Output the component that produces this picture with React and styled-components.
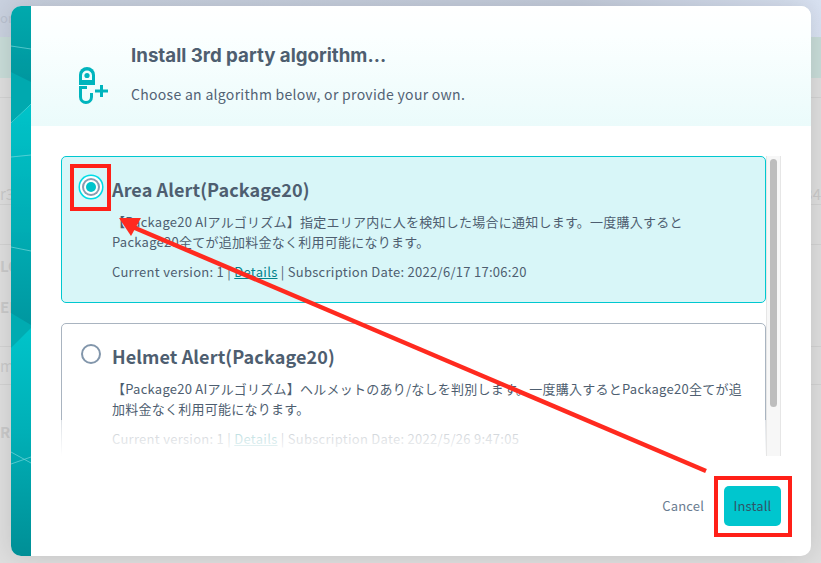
import React from "react";
import styled, { createGlobalStyle } from "styled-components";

const Global = createGlobalStyle`
  html, body { margin: 0; padding: 0; width: 821px; height: 563px; overflow: hidden; background: #dedede; }
  * { box-sizing: border-box; }
  body { font-family: "Noto Sans CJK JP", "Noto Sans", sans-serif; }
`;

const Page = styled.div`
  position: relative;
  width: 821px;
  height: 563px;
  overflow: hidden;
  background: #dedede;
`;

const BackTop = styled.div`
  height: 37px;
  background: linear-gradient(90deg, #c9d1df 0%, #c4ccdb 70%, #d9e2f2 100%);
  color: #b9c1cf;
  font-size: 13px;
  line-height: 36px;
`;
const BackBand = styled.div`
  height: 41px;
  background: #c8dcd8;
`;
const BackRow = styled.div`
  height: ${(p) => p.$h}px;
  border-bottom: 1px solid ${(p) => (p.$plain ? "transparent" : "#d2d2d2")};
  display: flex;
  justify-content: space-between;
  align-items: ${(p) => p.$align || "center"};
  color: #c9c9c9;
  font-size: 15px;
  font-weight: ${(p) => (p.$bold ? 700 : 400)};
`;

const Modal = styled.div`
  position: absolute;
  left: 11px;
  top: 6px;
  width: 800px;
  height: 550px;
  display: flex;
  background: #fff;
  border-radius: 10px;
  overflow: hidden;
  box-shadow: 0 0 24px rgba(0, 0, 0, 0.12);
`;

const Strip = styled.svg`
  width: 20px;
  height: 550px;
  flex: none;
  display: block;
`;

const Main = styled.div`
  flex: 1;
  min-width: 0;
  display: flex;
  flex-direction: column;
`;

const Header = styled.header`
  height: 120px;
  flex: none;
  display: flex;
  padding-left: 47px;
  background: linear-gradient(180deg, #ffffff 0%, #fbffff 25%, #ebfbfb 100%);
`;
const HeaderIcon = styled.svg`
  width: 32px;
  height: 40px;
  margin-top: 60px;
  flex: none;
`;
const HeaderText = styled.div`
  margin-left: 21px;
  padding-top: 37px;
`;
const Title = styled.h1`
  margin: 0;
  font: 700 18.7px/26px Inter, sans-serif;
  color: #4e5e70;
`;
const Subtitle = styled.p`
  margin: 15px 0 0;
  font-size: 14px;
  line-height: 20px;
  letter-spacing: 0.3px;
  color: #526274;
`;

const Body = styled.div`
  flex: none;
  height: 300px;
  margin: 30px 0 0 30px;
  width: 720px;
  display: flex;
`;
const List = styled.div`
  position: relative;
  width: 705px;
  flex: none;
  overflow: hidden;
`;
const Fade = styled.div`
  position: absolute;
  left: 0;
  right: 0;
  bottom: 0;
  height: 36px;
  background: linear-gradient(180deg, rgba(255, 255, 255, 0.6), #fff);
`;
const Card = styled.div`
  height: 147px;
  margin-bottom: 20px;
  display: grid;
  grid-template-columns: 50px 1fr;
  padding-top: 18px;
  border: 1px solid ${(p) => (p.$selected ? "#00c8d0" : "#a9b4c0")};
  border-radius: 5px;
  background: ${(p) => (p.$selected ? "#d8f6f8" : "#fff")};
  color: #4e5e70;
`;
const RadioCell = styled.div`
  display: flex;
  align-items: flex-start;
  padding-left: ${(p) => (p.$selected ? 24 : 19)}px;
  padding-top: ${(p) => (p.$selected ? 7 : 2)}px;
`;
const Radio = styled.span`
  display: block;
  border-radius: 50%;
  ${(p) =>
    p.$selected
      ? `width: 10px;
         height: 10px;
         background: #00c4cc;
         box-shadow: 0 0 0 2px #fff, 0 0 0 4px #8a9bb0, 0 0 0 6px #fff, 0 0 0 7.5px #00dce6;`
      : `width: 20px;
         height: 20px;
         background: #fff;
         border: 2px solid #8296ab;`}
`;
const CardTitle = styled.h2`
  margin: 0 0 9px;
  font-size: 18px;
  font-weight: 700;
  line-height: 28px;
  letter-spacing: 0.1px;
  color: #4e5e70;
`;
const Desc = styled.p`
  margin: 0;
  font-size: 13px;
  line-height: 20px;
  white-space: pre-line;
  letter-spacing: 0.25px;
`;
const Meta = styled.p`
  margin: 10px 0 0;
  font-size: 13px;
  line-height: 20px;
  letter-spacing: 0.28px;
`;
const MetaLink = styled.a`
  color: #00838c;
  text-decoration: underline;
`;

const Track = styled.div`
  width: 15px;
  flex: none;
  padding: 3px 3px 0;
  background: #f7f7f7;
  border-left: 1px solid #e6e6e6;
  border-right: 1px solid #e6e6e6;
`;
const Thumb = styled.div`
  height: 248px;
  border-radius: 4px;
  background: #bdbdbd;
`;

const Footer = styled.footer`
  flex: 1;
  display: flex;
  justify-content: flex-end;
  align-items: flex-start;
  padding: 30px 30px 0 0;
  gap: 20px;
`;
const CancelButton = styled.button`
  height: 40px;
  border: 0;
  padding: 0;
  background: none;
  font: 400 13px/40px "Noto Sans CJK JP", sans-serif;
  letter-spacing: 0.15px;
  color: #6a7c90;
`;
const InstallButton = styled.button`
  width: 57px;
  height: 40px;
  border: 0;
  padding: 0;
  border-radius: 5px;
  background: #00c6ce;
  font: 400 13px/40px "Noto Sans CJK JP", sans-serif;
  letter-spacing: 0.15px;
  color: #2f5568;
`;

const Annotations = styled.svg`
  position: absolute;
  left: 0;
  top: 0;
  width: 821px;
  height: 563px;
  pointer-events: none;
`;

const StripArt = () => (
  <Strip viewBox="0 0 20 550">
    <defs>
      <linearGradient id="s1" x1="0" y1="0" x2="0" y2="1">
        <stop offset="0" stopColor="#00a9ad" />
        <stop offset="1" stopColor="#00969e" />
      </linearGradient>
      <linearGradient id="s2" x1="0" y1="0" x2="0" y2="1">
        <stop offset="0" stopColor="#00c3c9" />
        <stop offset="0.5" stopColor="#00aeb5" />
        <stop offset="1" stopColor="#00929b" />
      </linearGradient>
      <linearGradient id="s3" x1="0" y1="0" x2="0" y2="1">
        <stop offset="0" stopColor="#00c4ca" />
        <stop offset="0.45" stopColor="#00b0b7" />
        <stop offset="1" stopColor="#008f96" />
      </linearGradient>
    </defs>
    <rect width="20" height="80" fill="url(#s1)" />
    <polygon points="0,66 20,76 20,98 0,117" fill="#00a9af" />
    <polygon points="0,117 20,98 20,324 0,342" fill="url(#s2)" />
    <rect y="320" width="20" height="230" fill="url(#s3)" />
    <polygon points="0,342 20,322 20,319 0,307" fill="#00abb1" />
    <g stroke="#7fdcdf" strokeWidth="0.8" fill="none" opacity="0.8">
      <line x1="0" y1="40" x2="20" y2="43" />
      <line x1="0" y1="151" x2="20" y2="149" />
      <line x1="0" y1="241" x2="20" y2="245" />
      <line x1="0" y1="446" x2="20" y2="457" />
      <line x1="0" y1="458" x2="20" y2="451" />
    </g>
  </Strip>
);

const AlgorithmIcon = () => (
  <HeaderIcon viewBox="0 0 32 40">
    <path d="M1 19V9a8 8 0 0 1 16 0V19z" fill="#00b4bd" />
    <path d="M4 14V9.5a5 5 0 0 1 10 0V14z" fill="#f0fcfc" />
    <circle cx="9" cy="9.5" r="2.6" fill="#00b4bd" />
    <path d="M9 21.5H2.5V31a5.5 5.5 0 0 0 11 0V27" fill="none" stroke="#00b4bd" strokeWidth="3" />
    <path d="M17 25h13M23.5 19v12" stroke="#00b4bd" strokeWidth="3" />
  </HeaderIcon>
);

const algorithms = [
  {
    name: "Area Alert(Package20)",
    desc: "【Package20 AIアルゴリズム】指定エリア内に人を検知した場合に通知します。一度購入すると\nPackage20全てが追加料金なく利用可能になります。",
    date: "2022/6/17 17:06:20",
    selected: true,
  },
  {
    name: "Helmet Alert(Package20)",
    desc: "【Package20 AIアルゴリズム】ヘルメットのあり/なしを判別します。一度購入するとPackage20全てが追\n加料金なく利用可能になります。",
    date: "2022/5/26 9:47:05",
    selected: false,
  },
];

export default function App() {
  return (
    <Page>
      <Global />
      <BackTop>on</BackTop>
      <BackBand />
      <BackRow $h={20} />
      <BackRow $h={107} $align="flex-end"><span>r3</span><span>34</span></BackRow>
      <BackRow $h={40} />
      <BackRow $h={42} $bold $plain><span>LO</span></BackRow>
      <BackRow $h={40} $bold $plain><span>ER</span></BackRow>
      <BackRow $h={20} />
      <BackRow $h={38}><span>mp</span></BackRow>
      <BackRow $h={94} $bold $plain><span>R</span></BackRow>
      <Modal>
        <StripArt />
        <Main>
          <Header>
            <AlgorithmIcon />
            <HeaderText>
              <Title>Install 3rd party algorithm...</Title>
              <Subtitle>Choose an algorithm below, or provide your own.</Subtitle>
            </HeaderText>
          </Header>
          <Body>
            <List>
              {algorithms.map((a) => (
                <Card key={a.name} $selected={a.selected}>
                  <RadioCell $selected={a.selected}>
                    <Radio $selected={a.selected} />
                  </RadioCell>
                  <div>
                    <CardTitle>{a.name}</CardTitle>
                    <Desc>{a.desc}</Desc>
                    <Meta>
                      Current version: 1 | <MetaLink>Details</MetaLink> | Subscription Date: {a.date}
                    </Meta>
                  </div>
                </Card>
              ))}
              <Fade />
            </List>
            <Track>
              <Thumb />
            </Track>
          </Body>
          <Footer>
            <CancelButton>Cancel</CancelButton>
            <InstallButton>Install</InstallButton>
          </Footer>
        </Main>
      </Modal>
      <Annotations viewBox="0 0 821 563">
        <rect x="72" y="166" width="37" height="43" fill="none" stroke="#ff2018" strokeWidth="4" />
        <rect x="716" y="478" width="74" height="57" fill="none" stroke="#ff2018" strokeWidth="4" />
        <line x1="706" y1="471" x2="128" y2="225" stroke="#ff2a1f" strokeWidth="4.5" />
        <polygon points="119,218 141,218 131,236" fill="#ff2a1f" />
      </Annotations>
    </Page>
  );
}
